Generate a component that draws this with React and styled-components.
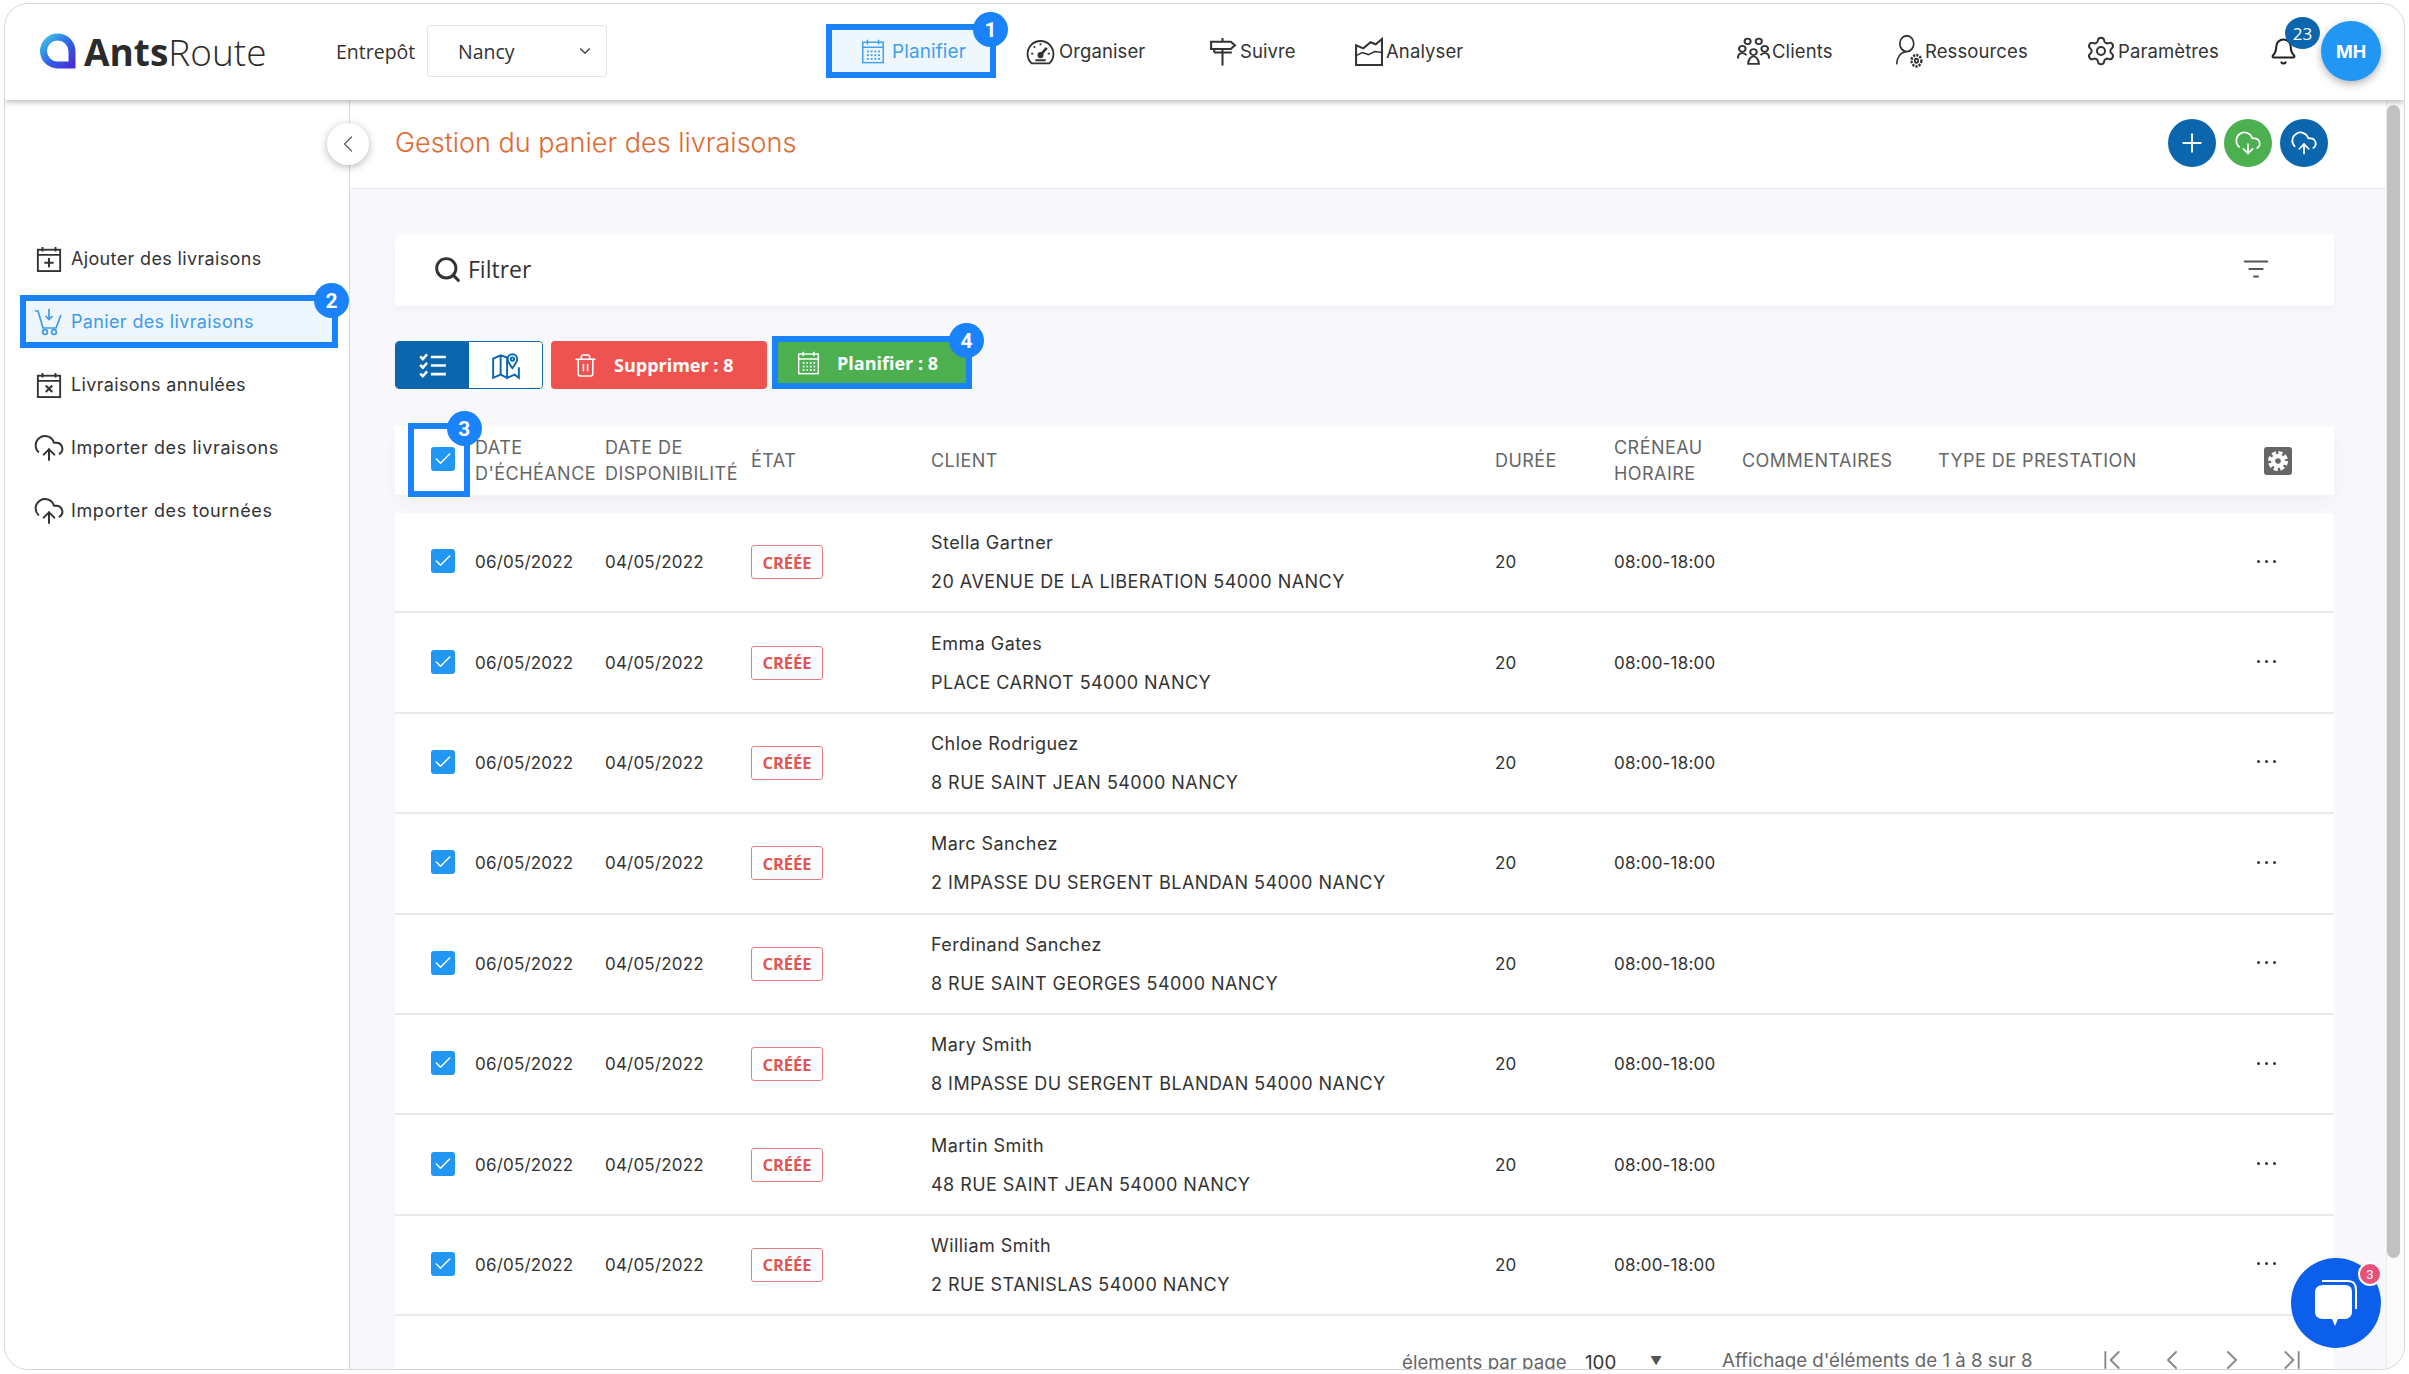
import React from 'react'
import styled, { createGlobalStyle, css } from 'styled-components'
import {
  Plus, CloudUpload, CloudDownload, Trash2, Search, ChevronLeft, ChevronDown, ChevronFirst,
  ChevronLast, ChevronRight, Check, Settings, Bell,
} from 'lucide-react'

const GlobalStyle = createGlobalStyle`
  html, body { margin: 0; padding: 0; height: 1374px; overflow: hidden; background: #fff; }
  body { font-family: Inter, "Liberation Sans", sans-serif; color: #333; }
  * { box-sizing: border-box; }
`

const Page = styled.div`
  height: 1374px;
  padding: 3px 4px 4px;
`

const Frame = styled.div`
  position: relative;
  height: 100%;
  display: flex;
  flex-direction: column;
  border: 1px solid #d4d4d4;
  border-radius: 24px;
  overflow: hidden;
  background: #fff;
`

/* Barre du haut */
const Header = styled.header`
  flex: none;
  height: 96px;
  display: flex;
  align-items: center;
  padding: 0 0 2px 34px;
  background: #fff;
  box-shadow: 0 2px 6px rgba(0, 0, 0, 0.28);
  position: relative;
  z-index: 3;
`

const Logo = styled.div`
  width: 297px;
  display: flex;
  align-items: center;
  gap: 8px;
`

const LogoText = styled.span`
  font-family: "Open Sans", sans-serif;
  font-size: 37px;
  font-weight: 300;
  color: #2b2b2b;
  b { font-weight: 700; }
`

const WarehouseLabel = styled.span`
  font-family: "Open Sans", sans-serif;
  font-size: 19.5px;
  width: 91px;
  color: #333;
`

const WarehouseSelect = styled.div`
  width: 180px;
  height: 52px;
  display: flex;
  align-items: center;
  justify-content: space-between;
  padding: 0 12px 0 30px;
  border: 1px solid #e4e4e4;
  border-radius: 3px;
  font-family: "Open Sans", sans-serif;
  font-size: 19.5px;
  color: #333;
  margin-right: 219px;
`

const NavItem = styled.div`
  flex: none;
  width: ${p => p.$w}px;
  display: flex;
  align-items: center;
  gap: ${p => p.$gap ?? 4}px;
  font-size: 18.5px;
  letter-spacing: 0.1px;
  color: ${p => (p.$active ? '#42a0ea' : '#333')};
  ${p => p.$active && css`
    height: 42px;
    width: 158px;
    padding-left: 28px;
    gap: 6px;
    font-size: 19px;
    background: #eef7fe;
  `}
`

const Spacer = styled.div`
  flex: 0 0 ${p => p.$w}px;
`

const Highlight = styled.div`
  position: relative;
  flex: none;
  display: ${p => (p.$block ? 'block' : 'inline-flex')};
  border: 6px solid #1a82fb;
`

const StepBadge = styled.span`
  position: absolute;
  top: ${p => p.$top}px;
  right: ${p => p.$right}px;
  width: 35px;
  height: 35px;
  display: flex;
  align-items: center;
  justify-content: center;
  border-radius: 50%;
  background: #1a82fb;
  color: #fff;
  font-family: Roboto, sans-serif;
  font-size: 21px;
  font-weight: 700;
  z-index: 2;
`

const NotificationArea = styled.div`
  position: relative;
  flex: none;
  width: 49px;
  height: 60px;
  margin-left: -3px;
  margin-right: 3px;
  display: flex;
  align-items: center;
  color: #222;
`

const CountBadge = styled.span`
  position: absolute;
  top: -4px;
  left: 16px;
  width: 35px;
  height: 32px;
  border-radius: 50%;
  display: flex;
  align-items: center;
  justify-content: center;
  background: #0b66ae;
  color: #fff;
  font-family: "Open Sans", sans-serif;
  font-size: 17px;
`

const Avatar = styled.div`
  flex: none;
  width: 60px;
  height: 60px;
  margin-right: 23px;
  border-radius: 50%;
  display: flex;
  align-items: center;
  justify-content: center;
  background: #2196f3;
  color: #fff;
  font-size: 18px;
  font-weight: 700;
  box-shadow: 0 3px 8px rgba(0, 0, 0, 0.3);
  position: relative;
  z-index: 1;
`

/* Corps */
const Body = styled.div`
  flex: 1;
  min-height: 0;
  display: flex;
`

const Sidebar = styled.aside`
  flex: none;
  width: 345px;
  padding: 127px 11px 0 15px;
  border-right: 1px solid #dcdcdc;
  background: #fff;
`

const SideItem = styled.div`
  height: 63px;
  display: flex;
  align-items: center;
  gap: ${p => p.$gap ?? 9}px;
  padding-left: ${p => p.$pad ?? 16}px;
  font-size: 18px;
  letter-spacing: ${p => p.$track ?? 0.35}px;
  color: #333;
  svg { flex: none; }
`

const SideHighlightInner = styled(SideItem)`
  height: 41px;
  background: #edf6fd;
  color: #3f9ae8;
`

const SideHighlightRow = styled.div`
  height: 63px;
  padding-top: 5px;
`

const Main = styled.main`
  position: relative;
  flex: 1;
  min-width: 0;
  display: flex;
  flex-direction: column;
  background: #f7f7fc;
`

const TitleBar = styled.div`
  flex: none;
  height: 89px;
  display: flex;
  align-items: center;
  justify-content: space-between;
  padding: 0 58px 2px 45px;
  background: #fff;
  border-bottom: 1px solid #e6e6ee;
`

const Title = styled.h1`
  margin: 0 0 2px;
  font-size: 27px;
  font-weight: 300;
  color: #e0692f;
`

const CollapseButton = styled.button`
  position: absolute;
  top: 23px;
  left: -23px;
  width: 42px;
  height: 42px;
  display: flex;
  align-items: center;
  justify-content: center;
  padding: 0;
  border: 0;
  border-radius: 50%;
  background: #fff;
  color: #666;
  box-shadow: 0 2px 8px rgba(0, 0, 0, 0.28);
  z-index: 2;
`

const RoundActions = styled.div`
  display: flex;
  gap: 8px;
`

const RoundButton = styled.button`
  width: 48px;
  height: 48px;
  padding: 0;
  border: 0;
  border-radius: 50%;
  display: flex;
  align-items: center;
  justify-content: center;
  color: #fff;
  background: ${p => p.$bg};
`

const Content = styled.div`
  flex: 1;
  min-height: 0;
  overflow: hidden;
  padding: 45px 52px 0 45px;
`

const FilterCard = styled.div`
  height: 72px;
  display: flex;
  align-items: center;
  padding: 0 65px 2px 38px;
  gap: 6px;
  background: #fff;
  border-radius: 4px;
  box-shadow: 0 4px 10px rgba(0, 0, 0, 0.03);
  font-family: "Open Sans", sans-serif;
  font-size: 23px;
  color: #333;
`

const FilterIcon = styled.span`
  margin-left: auto;
  color: #555;
  display: flex;
`

const Toolbar = styled.div`
  margin-top: 30px;
  height: 53px;
  display: flex;
  align-items: flex-end;
  gap: 8px;
`

const ViewToggle = styled.div`
  width: 148px;
  height: 48px;
  display: flex;
  border: 1px solid #0b66ae;
  border-radius: 4px;
  overflow: hidden;
  background: #fff;
`

const ViewOption = styled.div`
  flex: 1;
  display: flex;
  align-items: center;
  justify-content: center;
  background: ${p => (p.$on ? '#0b66ae' : '#fff')};
  color: ${p => (p.$on ? '#fff' : '#0b66ae')};
`

const ActionButton = styled.button`
  width: ${p => p.$w}px;
  height: ${p => p.$h || 48}px;
  display: flex;
  align-items: center;
  gap: ${p => p.$gap}px;
  padding: 0 0 0 ${p => p.$pad}px;
  border: 0;
  border-radius: ${p => (p.$flat ? 0 : 4)}px;
  background: ${p => p.$bg};
  color: #fff;
  font-family: "Open Sans", sans-serif;
  font-size: 18px;
  font-weight: 700;
`

const PlanHighlight = styled(Highlight)`
  margin-left: -3px;
`

const tableColumns = css`
  display: grid;
  grid-template-columns: 80px 130px 146px 180px 564px 119px 128px 196px 1fr;
  align-items: center;
`

const TableHead = styled.div`
  ${tableColumns}
  position: relative;
  margin-top: 37px;
  height: 69px;
  background: #fff;
  box-shadow: 0 8px 14px rgba(0, 0, 0, 0.03);
  font-size: 18px;
  letter-spacing: 0.45px;
  line-height: 26px;
  color: #666;
`

const HeadCheckHighlight = styled(Highlight)`
  position: absolute;
  top: -3px;
  left: 13px;
  width: 62px;
  height: 74px;
  padding: 18px 0 0 17px;
  display: block;
`

const HeadCell = styled.div`
  white-space: nowrap;
`

const TypeCell = styled(HeadCell)`
  display: flex;
  justify-content: space-between;
  align-items: center;
`

const HeadGear = styled.div`
  margin-right: 42px;
  width: 28px;
  height: 28px;
  border-radius: 3px;
  background: #666;
  display: flex;
  align-items: center;
  justify-content: center;
`

const Rows = styled.div`
  margin-top: 18px;
  background: #fff;
`

const Row = styled.div`
  ${tableColumns}
  height: 100.4px;
  border-bottom: 2px solid #e9e9e9;
  font-size: 17px;
  letter-spacing: 0.2px;
  color: #333;
`

const CheckCell = styled.div`
  padding-left: 36px;
  margin-top: -2px;
`

const Checkbox = styled.span`
  width: 24px;
  height: 24px;
  border-radius: 3px;
  display: flex;
  align-items: center;
  justify-content: center;
  background: #2196f3;
  color: #fff;
`

const StatusTag = styled.span`
  width: 72px;
  height: 34px;
  display: flex;
  align-items: center;
  justify-content: center;
  border: 1px solid #e57f7f;
  border-radius: 3px;
  font-family: "Open Sans", sans-serif;
  font-size: 16.5px;
  font-weight: 700;
  letter-spacing: 0;
  color: #e25555;
`

const ClientCell = styled.div`
  display: flex;
  flex-direction: column;
  gap: 16px;
  font-size: 18px;
  letter-spacing: 0.45px;
  line-height: 23px;
  white-space: nowrap;
`

const DotsCell = styled.div`
  justify-self: end;
  margin: -2px 58px 0 0;
  display: flex;
  gap: 5px;
`

const Dot = styled.i`
  width: 3px;
  height: 3px;
  border-radius: 50%;
  background: #333;
`

const Pager = styled.div`
  height: 60px;
  padding: 28px 0 0 1007px;
  display: flex;
  align-items: center;
  background: #fff;
  font-size: 18.7px;
  color: #666;
  white-space: nowrap;
`

const PerPage = styled.span`
  width: 183px;
  margin-top: 5px;
`

const PerPageValue = styled.span`
  width: 65px;
  color: #333;
  margin-top: 5px;
`

const PagerArrow = styled.span`
  width: 72px;
  font-size: 12px;
  color: #555;
`

const PagerInfo = styled.span`
  width: 374px;
`

const PagerButtons = styled.div`
  display: flex;
  gap: 28px;
  color: #888;
`

/* Barre de défilement */
const ScrollTrack = styled.div`
  flex: none;
  width: 18px;
  padding: 5px 5px 0 0;
  background: #fbfbfb;
  border-left: 1px solid #ececec;
`

const ScrollThumb = styled.div`
  height: 1153px;
  width: 13px;
  border-radius: 7px;
  background: #c1c1c1;
`

const ChatBubble = styled.div`
  position: absolute;
  right: 23px;
  bottom: 21px;
  width: 90px;
  height: 90px;
  border-radius: 50%;
  display: flex;
  align-items: center;
  justify-content: center;
  background: #0b5fea;
  z-index: 4;
`

const ChatCount = styled.span`
  position: absolute;
  top: 4px;
  right: -1px;
  width: 24px;
  height: 24px;
  border-radius: 50%;
  border: 2px solid #fff;
  display: flex;
  align-items: center;
  justify-content: center;
  background: #e8507a;
  color: #fff;
  font-family: Roboto, sans-serif;
  font-size: 13px;
`

/* Icônes dessinées */
const Svg = ({ size = 28, w, h, children, sw = 1.6 }) => (
  <svg width={w || size} height={h || size} viewBox="0 0 28 28" fill="none" stroke="currentColor" strokeWidth={sw} preserveAspectRatio="none">
    {children}
  </svg>
)

const LogoMark = () => (
  <svg width="37" height="36" viewBox="0 0 37 36" fill="none">
    <defs>
      <linearGradient id="logoGrad" x1="0" y1="0" x2="1" y2="1">
        <stop offset="0" stopColor="#3cc3ea" />
        <stop offset="0.55" stopColor="#2f62e6" />
        <stop offset="1" stopColor="#4a2fd6" />
      </linearGradient>
    </defs>
    <path d="M18.5 4 A14.5 14.5 0 0 1 33 18 V32 H18.5 A14 14 0 0 1 18.5 4 Z" stroke="url(#logoGrad)" strokeWidth="7" />
  </svg>
)

const CalendarDots = ({ size = 26 }) => (
  <Svg size={size} sw={1.6}>
    <rect x="3" y="4.5" width="22" height="22" />
    <path d="M3 10h22M8 2v5M20 2v5" />
    {[13.5, 17.5, 21.5].map(y => [7.5, 11.5, 15.5, 19.5].map(x => (
      <rect key={`${x}-${y}`} x={x} y={y} width="2" height="2" fill="currentColor" stroke="none" />
    )))}
  </Svg>
)

const GaugeIcon = () => (
  <Svg size={29} sw={1.8}>
    <path d="M5.5 25.5a12.5 12.5 0 1 1 17 0z" />
    <path d="M14 17.5 20 10.5" strokeWidth="2.6" />
    <circle cx="14" cy="17.5" r="2" fill="currentColor" />
    <path d="M14 6v2M7.5 9l1.3 1.3M5 16h2M21 16h2" />
    <path d="M9 22.5h10" />
  </Svg>
)

const SignIcon = () => (
  <Svg size={29} sw={2}>
    <path d="M3 4.5h19l4 3.5-4 3.5H3z" />
    <path d="M6 15h17M14 1v3M14 11.5v16" />
    <path d="M6 11.5v3.5" />
  </Svg>
)

const ChartIcon = () => (
  <Svg size={29} sw={2}>
    <path d="M2 8v19h25V2l-6 5-5-2-7 6z" />
    <path d="M2 18l6-3 6 2 6-3 7 1" strokeWidth="1.5" />
  </Svg>
)

const PeopleIcon = () => (
  <Svg w={33} h={30} sw={1.7}>
    <circle cx="9" cy="5" r="2.6" /><circle cx="18.5" cy="5" r="2.6" />
    <circle cx="4.5" cy="12" r="2.8" /><circle cx="14" cy="15" r="2.8" /><circle cx="23.5" cy="12" r="2.8" />
    <path d="M.8 21c0-3 1.5-5 3.7-5s3 1 3.6 2M27.2 21c0-3-1.5-5-3.7-5s-3 1-3.6 2" />
    <path d="M9.5 26c0-4 2-7 4.5-7s4.5 3 4.5 7z" />
  </Svg>
)

const PersonGearIcon = () => (
  <Svg w={30} h={34} sw={1.6}>
    <circle cx="11" cy="8" r="6.5" />
    <path d="M1.5 25c.5-6 4-10 9-10.5" />
    <circle cx="20" cy="22" r="1.6" />
    <circle cx="20" cy="22" r="4.6" strokeWidth="2.2" strokeDasharray="2 1" />
  </Svg>
)

const CartIcon = () => (
  <svg width="29" height="28" viewBox="0 0 29 28" fill="none" stroke="currentColor" strokeWidth="1.7">
    <path d="M1 3h3l5 17h13l5-13" />
    <path d="M15 1v10M11.5 8l3.5 3.5L18.5 8" />
    <circle cx="11" cy="24" r="2.4" /><circle cx="20" cy="24" r="2.4" />
  </svg>
)

const CalPlusIcon = ({ cross }) => (
  <Svg size={26} sw={2}>
    <rect x="2" y="4" width="24" height="23" />
    <path d="M2 9.5h24M7 1v5M21 1v5" />
    {cross
      ? <path d="M10.5 14.5l7 7M17.5 14.5l-7 7" strokeWidth="2.2" />
      : <path d="M14 13v10M9 18h10" strokeWidth="2.2" />}
  </Svg>
)

const ChecklistIcon = () => (
  <Svg size={30} sw={2.4}>
    <path d="M2 6l2.5 2.5L8.5 4M2 14l2.5 2.5L8.5 12M2 22l2.5 2.5L8.5 20" />
    <path d="M12 6.5h14M12 14.5h14M12 22.5h14" />
  </Svg>
)

const MapIcon = () => (
  <Svg size={30} sw={1.8}>
    <path d="M2 8l7-3 6 2v19l-6-3-7 3zM9 5v18M15 17v9l7-3 4 3V16" />
    <path d="M20 17c-3-4-4.5-6-4.5-8.5a4.5 4.5 0 0 1 9 0C24.5 11 23 13 20 17z" />
    <circle cx="20" cy="8.5" r="1.6" />
  </Svg>
)

const FilterLines = () => (
  <Svg size={26} sw={2.2}>
    <path d="M1 6h26M6 14h16M11 22h6" />
  </Svg>
)

const GearMark = () => (
  <svg width="24" height="24" viewBox="0 0 24 24">
    <circle cx="12" cy="12" r="7" fill="#fff" />
    <circle cx="12" cy="12" r="8" fill="none" stroke="#fff" strokeWidth="4" strokeDasharray="4 2.3" />
    <circle cx="12" cy="12" r="2.8" fill="#666" />
  </svg>
)

const ChatIcon = () => (
  <svg width="46" height="50" viewBox="0 0 46 50">
    <path d="M9 3h26c6 0 8 3 8 9v19" fill="none" stroke="#fff" strokeWidth="2" />
    <path d="M10 7h22c5 0 7 3 7 7v20c0 4-3 7-7 7h-7l-3 7-3-7h-9c-5 0-8-3-8-7V14c0-4 3-7 8-7z" fill="#fff" />
  </svg>
)

const rows = [
  ['Stella Gartner', '20 AVENUE DE LA LIBERATION 54000 NANCY'],
  ['Emma Gates', 'PLACE CARNOT 54000 NANCY'],
  ['Chloe Rodriguez', '8 RUE SAINT JEAN 54000 NANCY'],
  ['Marc Sanchez', '2 IMPASSE DU SERGENT BLANDAN 54000 NANCY'],
  ['Ferdinand Sanchez', '8 RUE SAINT GEORGES 54000 NANCY'],
  ['Mary Smith', '8 IMPASSE DU SERGENT BLANDAN 54000 NANCY'],
  ['Martin Smith', '48 RUE SAINT JEAN 54000 NANCY'],
  ['William Smith', '2 RUE STANISLAS 54000 NANCY'],
]

export default function App() {
  return (
    <Page>
      <GlobalStyle />
      <Frame>
        <Header>
          <Logo>
            <LogoMark />
            <LogoText><b>Ants</b>Route</LogoText>
          </Logo>
          <WarehouseLabel>Entrepôt</WarehouseLabel>
          <WarehouseSelect>
            Nancy
            <ChevronDown size={18} strokeWidth={1.5} />
          </WarehouseSelect>
          <Highlight>
            <NavItem $active><CalendarDots />Planifier</NavItem>
            <StepBadge $top={-18} $right={-18}>1</StepBadge>
          </Highlight>
          <Spacer $w={30} />
          <NavItem $w={182}><GaugeIcon />Organiser</NavItem>
          <NavItem $w={146} $gap={3}><SignIcon />Suivre</NavItem>
          <NavItem $w={383} $gap={3}><ChartIcon />Analyser</NavItem>
          <NavItem $w={158} $gap={2}><PeopleIcon />Clients</NavItem>
          <NavItem $w={190} $gap={0}><PersonGearIcon />Ressources</NavItem>
          <NavItem $w={187} $gap={1}><Settings size={32} strokeWidth={1.5} />Paramètres</NavItem>
          <NotificationArea>
            <Bell size={29} strokeWidth={1.7} />
            <CountBadge>23</CountBadge>
          </NotificationArea>
          <Avatar>MH</Avatar>
        </Header>
        <Body>
          <Sidebar>
            <SideItem><CalPlusIcon />Ajouter des livraisons</SideItem>
            <SideHighlightRow>
              <Highlight $block>
                <SideHighlightInner $pad={8} $gap={8}><CartIcon />Panier des livraisons</SideHighlightInner>
                <StepBadge $top={-18} $right={-17}>2</StepBadge>
              </Highlight>
            </SideHighlightRow>
            <SideItem><CalPlusIcon cross />Livraisons annulées</SideItem>
            <SideItem $pad={13} $gap={6} $track={0.6}><CloudUpload size={32} strokeWidth={1.5} />Importer des livraisons</SideItem>
            <SideItem $pad={13} $gap={6} $track={0.6}><CloudUpload size={32} strokeWidth={1.5} />Importer des tournées</SideItem>
          </Sidebar>
          <Main>
            <TitleBar>
              <Title>Gestion du panier des livraisons</Title>
              <RoundActions>
                <RoundButton $bg="#0b66ae"><Plus size={30} strokeWidth={1.5} /></RoundButton>
                <RoundButton $bg="#4caf50"><CloudDownload size={28} strokeWidth={1.5} /></RoundButton>
                <RoundButton $bg="#0b66ae"><CloudUpload size={28} strokeWidth={1.5} /></RoundButton>
              </RoundActions>
            </TitleBar>
            <Content>
              <FilterCard>
                <Search size={29} strokeWidth={2.4} />
                Filtrer
                <FilterIcon><FilterLines /></FilterIcon>
              </FilterCard>
              <Toolbar>
                <ViewToggle>
                  <ViewOption $on><ChecklistIcon /></ViewOption>
                  <ViewOption><MapIcon /></ViewOption>
                </ViewToggle>
                <ActionButton $w={216} $bg="#ef5350" $pad={22} $gap={16}>
                  <Trash2 size={25} strokeWidth={1.5} />
                  Supprimer : 8
                </ActionButton>
                <PlanHighlight>
                  <ActionButton $w={188} $h={41} $bg="#4caf50" $pad={18} $gap={16} $flat>
                    <CalendarDots size={25} />
                    Planifier : 8
                  </ActionButton>
                  <StepBadge $top={-19} $right={-18}>4</StepBadge>
                </PlanHighlight>
              </Toolbar>
              <TableHead>
                <HeadCheckHighlight>
                  <Checkbox><Check size={20} strokeWidth={1.8} /></Checkbox>
                  <StepBadge $top={-18} $right={-18}>3</StepBadge>
                </HeadCheckHighlight>
                <span />
                <HeadCell>DATE<br />D'ÉCHÉANCE</HeadCell>
                <HeadCell>DATE DE<br />DISPONIBILITÉ</HeadCell>
                <HeadCell>ÉTAT</HeadCell>
                <HeadCell>CLIENT</HeadCell>
                <HeadCell>DURÉE</HeadCell>
                <HeadCell>CRÉNEAU<br />HORAIRE</HeadCell>
                <HeadCell>COMMENTAIRES</HeadCell>
                <TypeCell>
                  TYPE DE PRESTATION
                  <HeadGear><GearMark /></HeadGear>
                </TypeCell>
              </TableHead>
              <Rows>
                {rows.map(([name, address]) => (
                  <Row key={name}>
                    <CheckCell><Checkbox><Check size={20} strokeWidth={1.8} /></Checkbox></CheckCell>
                    <div>06/05/2022</div>
                    <div>04/05/2022</div>
                    <StatusTag>CRÉÉE</StatusTag>
                    <ClientCell>
                      <span>{name}</span>
                      <span>{address}</span>
                    </ClientCell>
                    <div>20</div>
                    <div>08:00-18:00</div>
                    <span />
                    <DotsCell><Dot /><Dot /><Dot /></DotsCell>
                  </Row>
                ))}
              </Rows>
              <Pager>
                <PerPage>élements par page</PerPage>
                <PerPageValue>100</PerPageValue>
                <PagerArrow>▼</PagerArrow>
                <PagerInfo>Affichage d'éléments de 1 à 8 sur 8</PagerInfo>
                <PagerButtons>
                  <ChevronFirst size={32} strokeWidth={1.4} />
                  <ChevronLeft size={32} strokeWidth={1.4} />
                  <ChevronRight size={32} strokeWidth={1.4} />
                  <ChevronLast size={32} strokeWidth={1.4} />
                </PagerButtons>
              </Pager>
            </Content>
            <CollapseButton><ChevronLeft size={28} strokeWidth={1.2} /></CollapseButton>
          </Main>
          <ScrollTrack><ScrollThumb /></ScrollTrack>
        </Body>
        <ChatBubble>
          <ChatIcon />
          <ChatCount>3</ChatCount>
        </ChatBubble>
      </Frame>
    </Page>
  )
}
